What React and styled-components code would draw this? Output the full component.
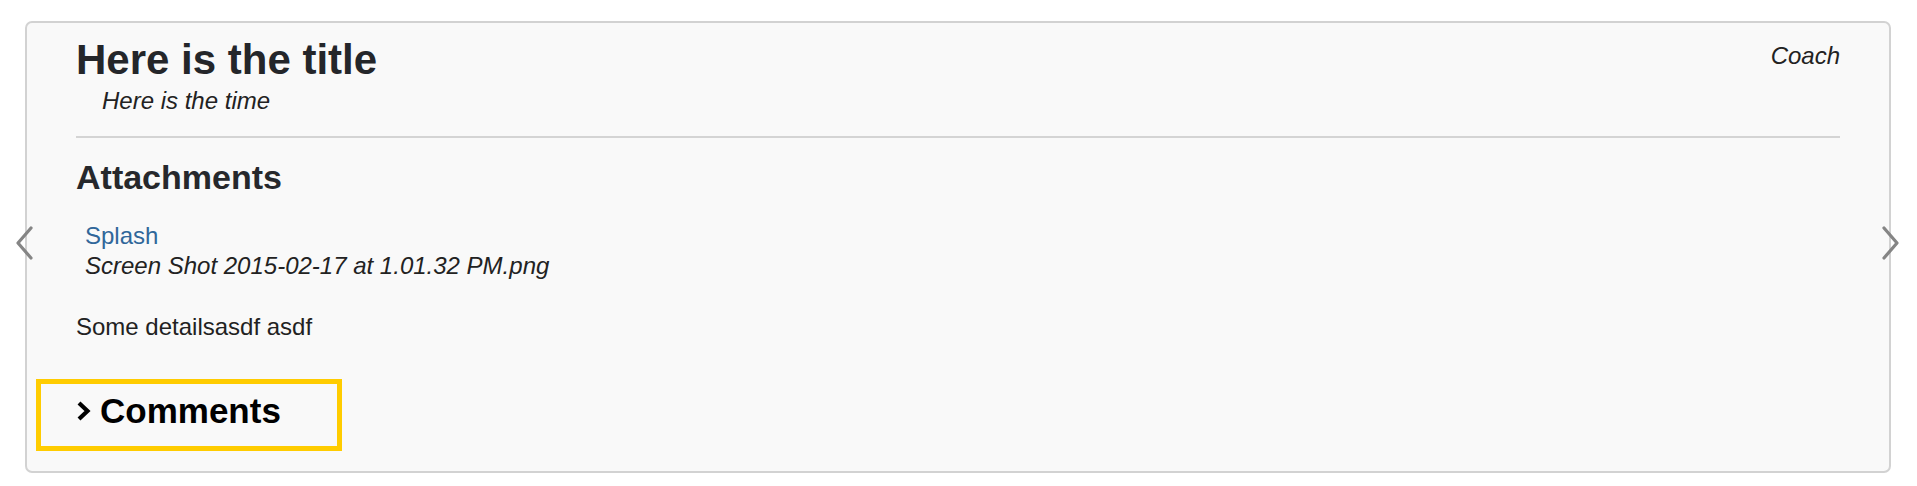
import styled, { createGlobalStyle } from 'styled-components';

const GlobalStyle = createGlobalStyle`
  html, body {
    margin: 0;
    padding: 0;
    background: #ffffff;
  }
  body {
    font-family: "Liberation Sans", Arial, Helvetica, sans-serif;
    color: #222;
  }
`;

function Chevron({ dir }) {
  const points = dir === 'left' ? '15,2 2,17 15,32' : '2,2 15,17 2,32';
  return (
    <svg width='17' height='34' viewBox='0 0 17 34'>
      <polyline
        points={points}
        fill='none'
        stroke='#858585'
        strokeWidth='3.2'
        strokeLinecap='round'
        strokeLinejoin='round'
      />
    </svg>
  );
}

function App() {
  return (
    <>
      <GlobalStyle />
      <Page>
        <Carousel>
          <Arrow side='left'>
            <Chevron dir='left' />
          </Arrow>
          <Card>
            <Header>
              <TitleBlock>
                <Title>Here is the title</Title>
                <Time>Here is the time</Time>
              </TitleBlock>
              <Role>Coach</Role>
            </Header>
            <Rule />
            <SectionTitle>Attachments</SectionTitle>
            <AttachmentList>
              <AttachmentLink href='#'>Splash</AttachmentLink>
              <FileName>Screen Shot 2015-02-17 at 1.01.32 PM.png</FileName>
            </AttachmentList>
            <Details>Some detailsasdf asdf</Details>
            <CommentsToggle>
              <svg width='15' height='22' viewBox='0 0 15 22'>
                <polyline
                  points='3,3 11.5,11 3,19'
                  fill='none'
                  stroke='#000'
                  strokeWidth='4.2'
                  strokeLinejoin='miter'
                />
              </svg>
              <CommentsLabel>Comments</CommentsLabel>
            </CommentsToggle>
          </Card>
          <Arrow side='right'>
            <Chevron dir='right' />
          </Arrow>
        </Carousel>
      </Page>
    </>
  );
}

const Page = styled.div`
  padding: 21px 26px 13px 25px;
`;

const Carousel = styled.div`
  position: relative;
`;

const Arrow = styled.div`
  position: absolute;
  top: 205px;
  ${({ side }) => (side === 'left' ? 'left: -9px;' : 'right: -8px;')}
  width: 17px;
  height: 34px;
  display: flex;
  z-index: 2;
`;

const Card = styled.section`
  background: #f9f9f9;
  border: 2px solid #d2d2d2;
  border-radius: 7px;
  padding: 14px 49px 20px 49px;
  display: flex;
  flex-direction: column;
`;

const Header = styled.div`
  display: flex;
  justify-content: space-between;
  align-items: flex-start;
`;

const TitleBlock = styled.div`
  display: flex;
  flex-direction: column;
`;

const Title = styled.h1`
  margin: 0;
  font-size: 42px;
  line-height: 46px;
  font-weight: bold;
  color: #24262a;
`;

const Time = styled.div`
  margin-top: 3px;
  padding-left: 26px;
  font-size: 24px;
  line-height: 30px;
  font-style: italic;
  color: #222;
`;

const Role = styled.div`
  margin-top: 4px;
  font-size: 24px;
  line-height: 30px;
  font-style: italic;
  color: #222;
`;

const Rule = styled.hr`
  margin: 20px 0 0;
  border: 0;
  height: 2px;
  background: #d4d4d4;
`;

const SectionTitle = styled.h2`
  margin: 19px 0 0;
  font-size: 34px;
  line-height: 40px;
  font-weight: bold;
  color: #26282c;
`;

const AttachmentList = styled.div`
  margin-top: 24px;
  padding-left: 9px;
  display: flex;
  flex-direction: column;
`;

const AttachmentLink = styled.a`
  font-size: 24px;
  line-height: 30px;
  color: #30679a;
  text-decoration: none;
`;

const FileName = styled.div`
  font-size: 24px;
  line-height: 30px;
  font-style: italic;
  color: #222;
`;

const Details = styled.p`
  margin: 31px 0 0;
  font-size: 24px;
  line-height: 30px;
  color: #222;
`;

const CommentsToggle = styled.div`
  margin: 37px 0 0 -40px;
  width: 306px;
  box-sizing: border-box;
  border: 5px solid #ffcc00;
  padding: 7px 0 15px 35px;
  display: flex;
  align-items: center;
  gap: 9px;
`;

const CommentsLabel = styled.span`
  font-size: 35px;
  line-height: 40px;
  font-weight: bold;
  color: #000;
`;

export default App;
